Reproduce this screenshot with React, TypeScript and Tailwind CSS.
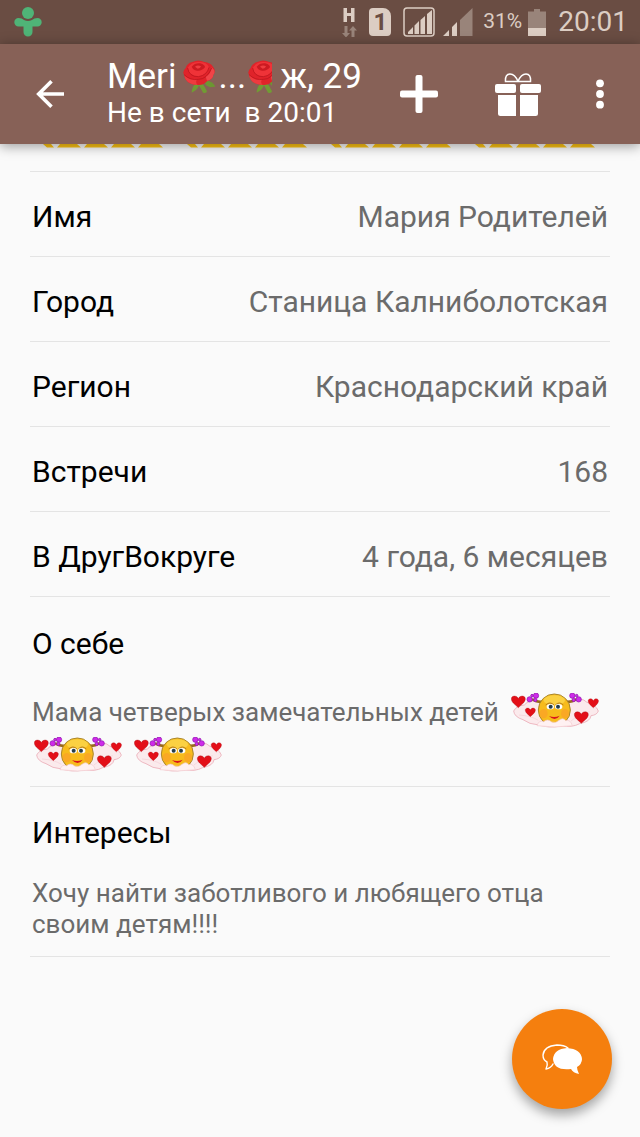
import React from "react";

interface ProfileField {
  label: string;
  value: string;
}

const fields: ProfileField[] = [
  { label: "Имя", value: "Мария Родителей" },
  { label: "Город", value: "Станица Калниболотская" },
  { label: "Регион", value: "Краснодарский край" },
  { label: "Встречи", value: "168" },
  { label: "В ДругВокруге", value: "4 года, 6 месяцев" }
];

const HEART = "M0 14C-8 6 -18 1 -19 -8C-20 -17 -6 -20 0 -10C6 -20 20 -17 19 -8C18 1 8 6 0 14Z";

function Smiley({ className = "" }: { className?: string }) {
  return (
    <svg viewBox="0 0 264 105" className={`inline-block h-[35px] w-[88px] align-[-7px] ${className}`} role="img" aria-label="smiley">
      {/* Cloud */}
      <path
        d="M8 54Q16 38 40 36Q54 18 84 26L180 24Q210 10 228 28Q254 34 262 54Q258 66 240 68Q238 86 206 92Q184 104 150 99Q112 106 84 96Q54 94 36 80Q10 72 8 54Z"
        fill="#fbeaec"
        stroke="#eeb9c2"
        strokeWidth="3"
      />
      <path d="M24 66Q60 68 82 82M180 84Q200 66 236 56" fill="none" stroke="#f3cfd5" strokeWidth="2" />
      {/* Pigtails */}
      <path d="M94 26Q78 28 66 20M166 26Q182 28 194 20" fill="none" stroke="#9a6a1c" strokeWidth="8" strokeLinecap="round" />
      {/* Bows */}
      <g fill="#cf2bea" stroke="#8b12a8" strokeWidth="2">
        <circle cx="56" cy="19" r="8" />
        <circle cx="75" cy="8" r="8" />
        <circle cx="73" cy="21" r="5" />
        <circle cx="63" cy="8" r="4" />
        <circle cx="203" cy="19" r="8" />
        <circle cx="184" cy="8" r="8" />
        <circle cx="188" cy="21" r="5" />
        <circle cx="197" cy="8" r="4" />
      </g>
      {/* Face */}
      <circle cx="130" cy="51" r="48" fill="#f7bb1c" stroke="#a9862c" strokeWidth="3" />
      <ellipse cx="130" cy="22" rx="32" ry="15" fill="#fbd142" />
      <ellipse cx="98" cy="62" rx="12" ry="14" fill="#faa824" />
      <ellipse cx="162" cy="62" rx="12" ry="14" fill="#faa824" />
      <path d="M104 36Q117 24 129 36M133 36Q145 24 157 36" fill="none" stroke="#b47818" strokeWidth="3" />
      <ellipse cx="118" cy="41" rx="11" ry="8" fill="#fff" />
      <ellipse cx="143" cy="41" rx="11" ry="8" fill="#fff" />
      <circle cx="119" cy="41" r="6" fill="#243d48" />
      <circle cx="141" cy="41" r="6" fill="#243d48" />
      <path d="M114 69Q130 76 146 68Q132 88 114 69Z" fill="#d9151c" />
      <path
        d="M78 98Q84 80 98 86Q110 76 122 87Q134 92 144 82Q156 72 164 83Q178 78 184 98Q130 106 78 98Z"
        fill="#fff1f2"
        stroke="#f2c8cd"
        strokeWidth="2"
      />
      {/* Hearts */}
      <g fill="#e30f18" stroke="#a80d15" strokeWidth="1">
        <path d={HEART} transform="translate(22 28) scale(1.1 1.15)" />
        <path d={HEART} transform="translate(58 59) scale(.8 .85)" />
        <path d={HEART} transform="translate(247 32) scale(.82 .9)" />
        <path d={HEART} transform="translate(211 75) scale(1.1 1.15)" />
      </g>
    </svg>
  );
}

function Rose({ clipped = false }: { clipped?: boolean }) {
  return (
    <svg
      viewBox={clipped ? "0 0 72 102" : "0 0 96 102"}
      className={clipped ? "h-[34px] w-6 shrink-0" : "h-[34px] w-8 shrink-0"}
      role="img"
      aria-label="rose"
    >
      <path d="M60 62L70 76L80 82L98 80Q88 64 72 62Z" fill="#6c9632" />
      <path d="M40 68Q26 80 26 98Q42 92 48 76L60 98Q70 102 72 94Q64 76 54 66Z" fill="#719b34" />
      {/* Outer petals */}
      <path d="M2 42Q-2 34 8 24Q12 10 28 6Q46 -3 64 6Q82 8 90 20Q100 32 91 44Q90 58 74 62Q60 78 40 74Q8 74 2 42Z" fill="#e0232a" />
      <path d="M3 44Q20 62 42 58Q36 68 44 75Q8 74 3 44Z" fill="#ee3b3f" />
      <path d="M68 50Q84 42 86 22Q100 34 91 44Q90 58 72 62Z" fill="#f04448" />
      {/* Bud */}
      <path d="M14 24Q26 4 48 6Q72 6 78 22Q72 46 46 50Q18 48 14 24Z" fill="#ef3338" />
      <path d="M26 20Q36 8 52 10Q66 14 66 22Q56 34 42 32Q30 30 26 20Z" fill="#cc1a21" />
      <path d="M36 20Q44 14 54 19Q52 26 44 26Z" fill="#ee3d40" />
      <path
        d="M14 24Q18 50 46 50Q72 46 78 22M3 44Q22 62 46 58Q72 58 86 24"
        fill="none"
        stroke="#b3121a"
        strokeWidth="2"
      />
    </svg>
  );
}

function StatusBar() {
  return (
    <div className="flex h-11 items-center bg-[#6a4d43] pr-3 pl-3.5 text-[#dccdc3]">
      <svg viewBox="0 0 28 30" className="h-[30px] w-7" fill="#4fb477">
        <circle cx="14" cy="6" r="6" />
        <path d="M4.500 11Q8 11 10 13Q14 15 18 13Q20 11 23.500 11A4.200 4.200 0 0 1 23.500 19.400H18.500V25A4.500 4.500 0 0 1 9.500 25V19.400H4.500A4.200 4.200 0 0 1 4.500 11Z" />
      </svg>

      <div className="ml-auto flex items-center">
        {/* Mobile data */}
        <svg viewBox="0 0 16 30" className="h-[30px] w-4">
          <path d="M2.500 1H6V6H10V1H13.500V15H10V9H6V15H2.500Z" fill="currentColor" />
          <path d="M3.500 19H6.500V26H9L5 30.500L1 26H3.500ZM10.500 30V23.500H8L12 19L16 23.500H13.500V30Z" fill="#99847a" />
        </svg>
        {/* SIM slot */}
        <div className="ml-3 flex h-7 w-[22px] items-center justify-center rounded-sm rounded-tr-lg bg-[#dccdc3] text-[24px] font-bold text-[#6a4d43]">
          1
        </div>
        <svg viewBox="0 0 32 30" className="ml-3 h-[30px] w-8">
          <rect x="1" y="1" width="30" height="28" rx="3" fill="none" stroke="currentColor" strokeWidth="1.500" />
          <path d="M5 27V25L10 20V27ZM11.500 27V18.500L16 14V27ZM17.500 27V13L22 9V27ZM24 27V7L29 3V27Z" fill="currentColor" />
        </svg>
        <svg viewBox="0 0 30 28" className="ml-2 h-7 w-[30px]">
          <path d="M0 28L6 22V28ZM9 28V19L14 14V28Z" fill="currentColor" />
          <path d="M17 28V12L29.500 0V28Z" fill="#99847a" />
        </svg>
        <span className="ml-2.5 text-[21px]">31%</span>
        <svg viewBox="0 0 18 27" className="ml-1.5 h-[27px] w-[18px]">
          <path d="M0 2.500H6V0H12V2.500H18V19H0Z" fill="#99847a" />
          <path d="M0 19H18V27H0Z" fill="currentColor" />
        </svg>
        <span className="ml-3 text-[28px]">20:01</span>
      </div>
    </div>
  );
}

function ProfileHeader() {
  return (
    <header className="relative z-10 flex h-[100px] items-center bg-[#876157] pr-4 pl-8 text-white shadow-[0_2px_12px_rgba(0,0,0,0.4)]">
      <button type="button" aria-label="Назад" className="flex h-9 w-9 items-center justify-center">
        <svg viewBox="0 0 28 28" className="h-7 w-7" fill="none" stroke="currentColor" strokeWidth="3.600">
          <path d="M15.500 1.300L2.700 14L15.500 26.700M2.700 14H28" />
        </svg>
      </button>

      <div className="ml-[39px] min-w-0 flex-1 pb-0.5 whitespace-nowrap">
        <h1 className="flex items-center text-[35px] leading-10">
          <span className="mr-1.5">Meri</span>
          <Rose />
          <span className="mr-0.5 ml-1">...</span>
          <Rose clipped />
          <span className="ml-2">ж, 29</span>
        </h1>
        <p className="text-[28px] leading-8 whitespace-pre">Не в сети  в 20:01</p>
      </div>

      <div className="flex shrink-0 items-center">
        <button type="button" aria-label="Добавить" className="flex h-12 w-12 items-center justify-center">
          <svg viewBox="0 0 38 38" className="h-[38px] w-[38px]" fill="currentColor">
            <rect x="15.500" y="0" width="7" height="38" rx="2" />
            <rect x="0" y="15.500" width="38" height="7" rx="2" />
          </svg>
        </button>
        <button type="button" aria-label="Подарок" className="ml-[51px] flex h-12 w-12 items-center justify-center">
          <svg viewBox="0 0 46 43" className="h-[43px] w-[46px]" fill="currentColor">
            <rect x="0" y="11" width="21" height="9" rx="2" />
            <rect x="25" y="11" width="21" height="9" rx="2" />
            <path d="M3 22H21V43H5.500Q3 43 3 40.500ZM25 22H43V40.500Q43 43 40.500 43H25Z" />
            <path
              d="M23 8.500H10.500Q10 1 15 1Q20 1 23 8.500ZM23 8.500H35.500Q36 1 31 1Q26 1 23 8.500Z"
              fill="none"
              stroke="currentColor"
              strokeWidth="1.500"
            />
          </svg>
        </button>
        <button type="button" aria-label="Меню" className="ml-[34px] flex h-12 w-12 items-center justify-center">
          <svg viewBox="0 0 8 30" className="h-[30px] w-2" fill="currentColor">
            <circle cx="4" cy="4.300" r="3.900" />
            <circle cx="4" cy="15" r="3.900" />
            <circle cx="4" cy="25.700" r="3.900" />
          </svg>
        </button>
      </div>
    </header>
  );
}

export default function App() {
  return (
    <div className="min-h-screen bg-[#fafafa] font-['Roboto','Noto_Sans',sans-serif]">
      <StatusBar />
      <ProfileHeader />

      <main className="px-[30px]">
        {/* Lower edge of the scrolled status row */}
        <div className="flex h-7 items-start gap-6 border-b border-[#e4e4e4] pl-[13px]">
          {[0, 1, 2, 3].map((i) => (
            <svg key={i} viewBox="0 0 120 4" className="h-1 w-[120px] shrink-0" fill="#ffc414">
              <path d="M0 0H8L11 3.500H4ZM17 0H34L38 3.500H14ZM44 0H61L65 3.500H41ZM71 0H88L92 3.500H68ZM98 0H116L120 3.500H95Z" />
            </svg>
          ))}
        </div>

        <dl>
          {fields.map((field) => (
            <div
              key={field.label}
              className="flex h-[85px] items-center justify-between border-b border-[#e4e4e4] px-0.5 pt-1 text-[30px] whitespace-nowrap"
            >
              <dt className="text-black">{field.label}</dt>
              <dd className="text-[#6b6b6b]">{field.value}</dd>
            </div>
          ))}
        </dl>

        <section className="border-b border-[#e4e4e4] px-0.5 pt-[29px] pb-2">
          <h2 className="text-[30px] leading-9 text-black">О себе</h2>
          <p className="mt-7 text-[26px] leading-11 text-[#6b6b6b]">
            Мама четверых замечательных детей
            <Smiley className="ml-3" /> <Smiley className="mr-1.5 ml-0.5" /> <Smiley />
          </p>
        </section>

        <section className="border-b border-[#e4e4e4] px-0.5 pt-7 pb-4">
          <h2 className="text-[30px] leading-9 text-black">Интересы</h2>
          <p className="mt-[27px] text-[26px] leading-[31px] text-[#6b6b6b]">
            Хочу найти заботливого и любящего отца своим детям!!!!
          </p>
        </section>
      </main>

      <button
        type="button"
        aria-label="Написать"
        className="fixed right-7 bottom-7 flex h-[100px] w-[100px] items-center justify-center rounded-full bg-[#f57f0e] shadow-[0_6px_12px_rgba(0,0,0,0.35)]"
      >
        <svg viewBox="0 0 40 30" className="h-[30px] w-10">
          <path
            d="M26 4Q22 1 15 1Q2 2 1 11Q1 16 5 18Q6 21 4 25Q9 24 11 20"
            fill="none"
            stroke="#fff"
            strokeWidth="1.400"
            strokeLinejoin="round"
            strokeLinecap="round"
          />
          <path d="M25 4Q39 5 40 15Q40 20 35 23Q35 26 37 30Q31 29 29 25Q12 27 11 15Q12 5 25 4Z" fill="#fff" />
        </svg>
      </button>
    </div>
  );
}
